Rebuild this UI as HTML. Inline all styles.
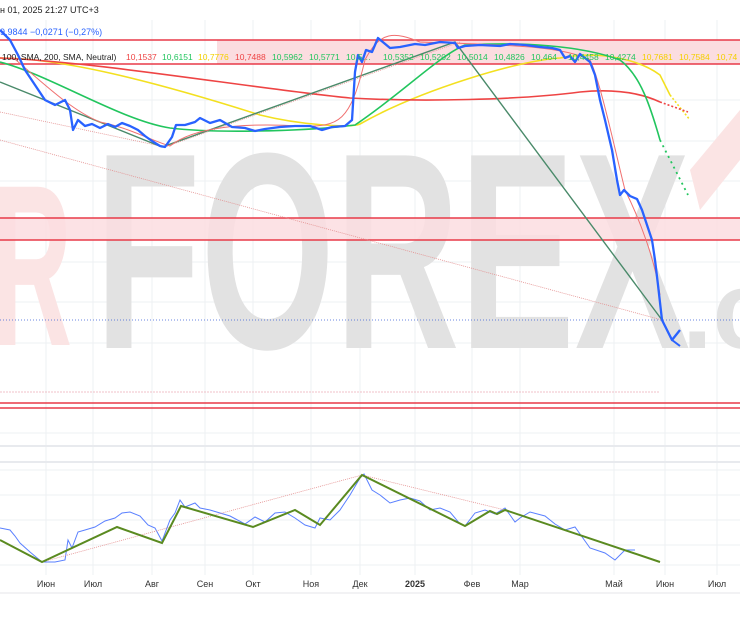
<!DOCTYPE html>
<html><head><meta charset="utf-8"><style>
html,body{margin:0;padding:0;background:#fff;width:740px;height:620px;overflow:hidden;font-family:"Liberation Sans",sans-serif}
svg{position:absolute;left:0;top:0}
</style></head><body>
<svg width="740" height="620" viewBox="0 0 740 620" xmlns="http://www.w3.org/2000/svg">
<g stroke="#eef0f3" stroke-width="1">
<line x1="46" y1="20" x2="46" y2="575"/><line x1="93" y1="20" x2="93" y2="575"/><line x1="152" y1="20" x2="152" y2="575"/><line x1="205" y1="20" x2="205" y2="575"/><line x1="253" y1="20" x2="253" y2="575"/><line x1="311" y1="20" x2="311" y2="575"/><line x1="360" y1="20" x2="360" y2="575"/><line x1="415" y1="20" x2="415" y2="575"/><line x1="472" y1="20" x2="472" y2="575"/><line x1="520" y1="20" x2="520" y2="575"/><line x1="614" y1="20" x2="614" y2="575"/><line x1="665" y1="20" x2="665" y2="575"/><line x1="717" y1="20" x2="717" y2="575"/>
<line x1="0" y1="100" x2="740" y2="100"/><line x1="0" y1="141" x2="740" y2="141"/><line x1="0" y1="181" x2="740" y2="181"/><line x1="0" y1="262" x2="740" y2="262"/><line x1="0" y1="302" x2="740" y2="302"/><line x1="0" y1="343" x2="740" y2="343"/>
<line x1="0" y1="433" x2="740" y2="433"/><line x1="0" y1="470" x2="740" y2="470"/><line x1="0" y1="495" x2="740" y2="495"/><line x1="0" y1="520" x2="740" y2="520"/><line x1="0" y1="545" x2="740" y2="545"/><line x1="0" y1="565" x2="740" y2="565"/>
</g>
<line x1="0" y1="446" x2="740" y2="446" stroke="#e8eaee" stroke-width="2"/>
<line x1="0" y1="462" x2="740" y2="462" stroke="#e8eaee" stroke-width="2"/>
<line x1="0" y1="593" x2="740" y2="593" stroke="#e4e6ea" stroke-width="1"/>
<!-- watermark -->
<text x="-8" y="345" font-family="Liberation Sans" font-weight="bold" font-size="230" fill="#fbe4e4" textLength="80" lengthAdjust="spacingAndGlyphs">R</text>
<text x="95" y="348" font-family="Liberation Sans" font-weight="bold" font-size="280" fill="#e2e2e2" textLength="595" lengthAdjust="spacingAndGlyphs">FOREX</text>
<text x="682" y="348" font-family="Liberation Sans" font-weight="bold" font-size="110" fill="#e2e2e2">.c</text>
<polygon points="690,170 740,110 740,160 700,210" fill="#fbe4e4"/>
<!-- bands -->
<rect x="217" y="40" width="523" height="24" fill="#fbdde0"/>
<line x1="0" y1="40" x2="740" y2="40" stroke="#e83a48" stroke-width="1.5"/>
<line x1="0" y1="64" x2="740" y2="64" stroke="#e83a48" stroke-width="1.5"/>
<rect x="0" y="218" width="740" height="22" fill="#fbdde0" fill-opacity="0.85"/>
<line x1="0" y1="218" x2="740" y2="218" stroke="#e83a48" stroke-width="1.5"/>
<line x1="0" y1="240" x2="740" y2="240" stroke="#e83a48" stroke-width="1.5"/>
<line x1="0" y1="403" x2="740" y2="403" stroke="#e83a48" stroke-width="1.5"/>
<line x1="0" y1="408" x2="740" y2="408" stroke="#e83a48" stroke-width="1.5"/>
<line x1="0" y1="392" x2="660" y2="392" stroke="#f0c0c8" stroke-width="1" stroke-dasharray="2,1"/>
<line x1="0" y1="320" x2="740" y2="320" stroke="#3a5fd8" stroke-width="0.8" stroke-dasharray="1,2"/>
<!-- dotted trendlines -->
<line x1="0" y1="140" x2="662" y2="320" stroke="#e49090" stroke-width="0.8" stroke-dasharray="1,1"/>
<line x1="0" y1="112" x2="165" y2="147" stroke="#e49090" stroke-width="0.8" stroke-dasharray="1,1"/>
<line x1="165" y1="147" x2="460" y2="42" stroke="#e49090" stroke-width="0.8" stroke-dasharray="1,1"/>
<!-- MAs -->
<path d="M0,58 C60,58 150,80 260,115 C300,125 350,128 360,124 C420,90 520,60 560,58 C600,50 640,60 660,75 L670,95" fill="none" stroke="#f3e020" stroke-width="1.6"/>
<path d="M670,95 L690,120" stroke="#f3e020" stroke-width="1.6" stroke-dasharray="2,2"/>
<path d="M0,58 C100,62 250,88 350,98 C420,102 520,100 580,92 C620,88 645,95 660,102" fill="none" stroke="#ee4444" stroke-width="1.6"/>
<path d="M660,102 L688,112" stroke="#ee4444" stroke-width="1.6" stroke-dasharray="2,2"/>
<path d="M0,62 C50,75 120,120 170,128 C210,133 300,132 355,125 C400,95 440,55 465,45 C520,42 580,45 620,60 C640,75 650,105 660,140" fill="none" stroke="#22c55e" stroke-width="1.6"/>
<path d="M660,140 L688,195" stroke="#22c55e" stroke-width="1.8" stroke-dasharray="2,4"/>
<path d="M0,82 L162,147 L455,42 L662,320" fill="none" stroke="#4a8a6a" stroke-width="1.4"/>
<path d="M10,55 C40,80 70,110 100,122 C130,128 150,140 170,146 C190,130 230,122 300,126 C340,127 350,122 365,60 C380,30 395,32 420,42 C500,45 560,45 590,60 C600,80 615,150 625,190 C640,220 655,260 660,295" fill="none" stroke="#f07070" stroke-width="1"/>
<!-- price -->
<path d="M0,30 L10,40 L18,55 L25,70 L35,85 L45,100 L55,105 L65,100 L70,110 L73,130 L78,120 L85,126 L92,124 L100,128 L108,124 L115,127 L122,123 L130,126 L138,130 L145,136 L152,141 L160,146 L165,147 L172,137 L176,125 L185,125 L195,122 L200,118 L210,123 L220,120 L232,127 L245,128 L255,131 L265,129 L280,127 L295,126 L310,126 L322,130 L332,127 L345,126 L352,120 L355,72 L358,55 L362,62 L366,50 L372,52 L378,38 L390,48 L400,47 L415,44 L425,45 L440,42 L455,43 L458,48 L465,46 L480,45 L500,46 L510,44 L525,45 L540,47 L552,48 L560,50 L565,58 L570,56 L575,62 L580,54 L585,58 L590,62 L595,75 L600,100 L605,120 L612,150 L617,180 L620,195 L624,190 L630,196 L637,199 L642,210 L647,225 L652,240 L655,260 L658,285 L662,320 L672,340 L680,330" fill="none" stroke="#2962ff" stroke-width="2.3" stroke-linejoin="round"/>
<path d="M672,340 L680,346" stroke="#2962ff" stroke-width="2"/>
<!-- lower chart -->
<path d="M0,528 L10,530 L15,536 L20,543 L30,552 L42,562 L55,562 L65,560 L68,540 L72,548 L78,532 L85,530 L95,527 L105,521 L115,518 L122,513 L130,512 L140,516 L148,525 L155,528 L162,541 L170,520 L175,513 L180,500 L185,507 L195,503 L200,508 L210,510 L220,513 L230,516 L245,524 L255,517 L265,522 L275,513 L285,512 L295,518 L305,525 L315,528 L320,518 L330,520 L340,510 L350,495 L360,478 L364,474 L372,490 L380,495 L390,503 L400,500 L410,498 L420,501 L430,510 L440,508 L450,512 L460,524 L465,526 L475,513 L485,510 L495,514 L505,508 L515,522 L520,518 L530,512 L545,516 L555,524 L565,530 L575,527 L590,548 L605,553 L615,560 L625,550 L635,550" fill="none" stroke="#5a80ff" stroke-width="1"/>
<path d="M42,562 L362,475 L505,510" fill="none" stroke="#e49090" stroke-width="0.8" stroke-dasharray="1,1"/>
<path d="M0,540 L42,562 L117,527 L162,543 L181,506 L253,527 L295,510 L320,525 L362,475 L465,526 L490,511 L497,514 L505,510 L660,562" fill="none" stroke="#5a8a20" stroke-width="2" stroke-linejoin="miter"/>
<!-- axis labels -->
<g font-family="Liberation Sans" font-size="9" fill="#333" text-anchor="middle">
<text x="46" y="587">Июн</text><text x="93" y="587">Июл</text><text x="152" y="587">Авг</text><text x="205" y="587">Сен</text><text x="253" y="587">Окт</text><text x="311" y="587">Ноя</text><text x="360" y="587">Дек</text><text x="415" y="587" font-weight="bold">2025</text><text x="472" y="587">Фев</text><text x="520" y="587">Мар</text><text x="614" y="587">Май</text><text x="665" y="587">Июн</text><text x="717" y="587">Июл</text>
</g>
<!-- header -->
<text x="0" y="13" font-family="Liberation Sans" font-size="9" fill="#222">н 01, 2025 21:27 UTC+3</text>
<text x="0" y="35" font-family="Liberation Sans" font-size="9" fill="#2962ff">9,9844  −0,0271 (−0,27%)</text>
<g font-family="Liberation Sans" font-size="8.5">
<text x="2" y="60" fill="#222">100, SMA, 200, SMA, Neutral)</text>
<text x="126" y="60" fill="#ee4444">10,1537</text>
<text x="162" y="60" fill="#22c55e">10,6151</text>
<text x="198" y="60" fill="#f3d000">10,7776</text>
<text x="235" y="60" fill="#ee4444">10,7488</text>
<text x="272" y="60" fill="#22c55e">10,5962</text>
<text x="309" y="60" fill="#22c55e">10,5771</text>
<text x="346" y="60" fill="#22c55e">10,5…</text>
<text x="383" y="60" fill="#22c55e">10,5352</text>
<text x="420" y="60" fill="#22c55e">10,5202</text>
<text x="457" y="60" fill="#22c55e">10,5014</text>
<text x="494" y="60" fill="#22c55e">10,4826</text>
<text x="531" y="60" fill="#22c55e">10,464</text>
<text x="568" y="60" fill="#22c55e">10,4458</text>
<text x="605" y="60" fill="#22c55e">10,4274</text>
<text x="642" y="60" fill="#f3d000">10,7681</text>
<text x="679" y="60" fill="#f3d000">10,7584</text>
<text x="716" y="60" fill="#f3d000">10,74</text>
</g>
</svg>
</body></html>
